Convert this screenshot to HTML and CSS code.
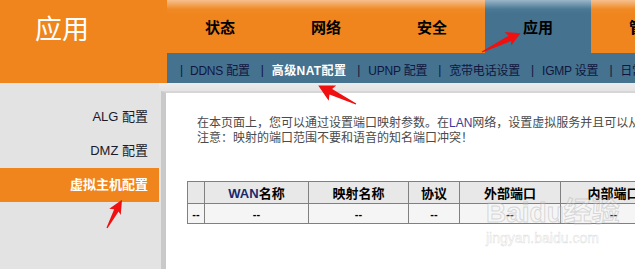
FILE: index.html
```html
<!DOCTYPE html>
<html lang="zh-CN">
<head>
    <meta charset="UTF-8">
    <title>应用 - 虚拟主机配置</title>
    <link rel="stylesheet" href="styles.css">
</head>
<body>

    <div class="top">
        <div class="logo">应用</div>
        <div class="nav">
            <div class="tabs">
                <div class="tab">状态</div>
                <div class="tab">网络</div>
                <div class="tab">安全</div>
                <div class="tab active">应用</div>
                <div class="tab">管理</div>
            </div>
            <div class="subnav">
                <span class="sep">|</span><span>DDNS 配置</span>
                <span class="sep">|</span><span class="cur">高级NAT配置</span>
                <span class="sep">|</span><span>UPNP 配置</span>
                <span class="sep">|</span><span>宽带电话设置</span>
                <span class="sep">|</span><span>IGMP 设置</span>
                <span class="sep">|</span><span>日常应用</span>
            </div>
        </div>
    </div>

    <div class="body">
        <ul class="side">
            <li>ALG 配置</li>
            <li>DMZ 配置</li>
            <li class="active">虚拟主机配置</li>
        </ul>
        <div class="main">
            <div class="panel">
                <p class="intro">在本页面上，您可以通过设置端口映射参数。在<span class="lan">LAN</span>网络，设置虚拟服务并且可以从WAN侧访问。<br>注意：映射的端口范围不要和语音的知名端口冲突！</p>
                <table class="grid">
                    <tr>
                        <th class="c0"></th>
                        <th class="c1"><span class="lan">WAN</span>名称</th>
                        <th class="c2">映射名称</th>
                        <th class="c3">协议</th>
                        <th class="c4">外部端口</th>
                        <th class="c5">内部端口</th>
                        <th class="c6">服务器IP地址</th>
                    </tr>
                    <tr>
                        <td>--</td>
                        <td>--</td>
                        <td>--</td>
                        <td>--</td>
                        <td>--</td>
                        <td>--</td>
                        <td>--</td>
                    </tr>
                </table>
            </div>
        </div>
    </div>

    <div class="mark">
        <div class="mark-big">Bai<span class="paw">du</span>经验</div>
        <div class="mark-small">jingyan.baidu.com</div>
    </div>

    <svg class="arrows" width="635" height="269" viewBox="0 0 635 269">
        <g fill="#f01010">
            <polygon transform="translate(482 52) rotate(-26)" points="0,-0.6 31,-3 29,-8 43,0 29,7 31,3 0,0.6"/>
            <polygon transform="translate(356 104) rotate(-154)" points="0,-0.6 28,-3 26,-9 42,0 26,8 28,3 0,0.6"/>
            <polygon transform="translate(107 228) rotate(-62)" points="0,-0.6 20,-2.5 18,-7 32,0 18,6 20,2.5 0,0.6"/>
        </g>
    </svg>

</body>
</html>
```

FILE: styles.css
```css
html, body { margin: 0; padding: 0; }
body { width: 635px; height: 269px; overflow: hidden; position: relative; background: #e3e3e3; font-family: "Liberation Sans", "Noto Sans CJK SC", sans-serif; font-size: 12px; color: #222; }

.top { display: flex; height: 83px; }
.logo { width: 167px; flex-shrink: 0; background: #f0851d; color: #fff; font-size: 27px; padding: 8px 0 0 35px; box-sizing: border-box; }
.nav { flex: 1; display: flex; flex-direction: column; min-width: 0; }
.tabs { display: flex; height: 53px; }
.tab { width: 106px; flex-shrink: 0; text-align: center; line-height: 56px; font-size: 15px; font-weight: bold; color: #000; background: linear-gradient(#f7c08f 0, #f08a26 9px, #f0851d 14px); }
.tab.active { background: linear-gradient(#9bb6c8 0, #4b7995 9px, #44728f 14px); }
.subnav { height: 30px; background: #44728f; display: flex; align-items: center; padding: 3px 0 0 11px; box-sizing: border-box; white-space: nowrap; color: #111640; font-size: 12px; letter-spacing: -0.2px; }
.subnav .sep { margin: 0 8px 0 11px; }
.subnav .sep:first-child { margin-left: 2px; margin-right: 7px; }
.subnav .cur { color: #fff; font-weight: bold; letter-spacing: 0.4px; }

.body { display: flex; height: 186px; }
.side { width: 159px; flex-shrink: 0; list-style: none; margin: 0; padding: 17px 0 0; }
.side li { height: 34px; line-height: 34px; text-align: right; padding-right: 11px; font-size: 13px; color: #1a1a2a; }
.side li.active { background: #f0851d; color: #fff; font-weight: bold; }
.main { flex: 1; min-width: 0; overflow: hidden; padding: 8px 0 0 2px; background: linear-gradient(#ececec, #e3e3e3 8px); }
.panel { height: 100%; background: #fff; border-left: 5px solid #c9c9c9; border-top: 2px solid #d6d6d6; padding: 23px 0 0 21px; box-sizing: border-box; }
.intro { margin: 0; padding-left: 10px; white-space: nowrap; font-size: 12px; line-height: 15px; color: #4a4a4a; }
.lan { color: #3a3a9a; }

.grid { margin-top: 35px; border-collapse: collapse; table-layout: fixed; width: 600px; font-size: 13px; }
.grid th, .grid td { border: 1px solid #808080; text-align: center; padding: 0; white-space: nowrap; overflow: hidden; }
.grid th { height: 21px; background: #e8e8e8; color: #000; font-weight: bold; }
.grid th .lan { color: #1a2a6a; }
.grid td { height: 19px; background: #f5f5f5; color: #000; font-weight: bold; font-size: 11px; }
.c0 { width: 16px; }
.c1 { width: 103px; }
.c2 { width: 99px; }
.c3 { width: 50px; }
.c4 { width: 100px; }
.c5 { width: 105px; }
.c6 { width: 120px; }

.mark { position: absolute; left: 486px; top: 196px; color: rgba(255, 255, 255, 0.2); -webkit-text-stroke: 1px rgba(175, 175, 175, 0.45); font-family: "Liberation Sans", "Noto Sans CJK SC", sans-serif; pointer-events: none; }
.mark-big { font-size: 28px; font-weight: bold; line-height: 34px; }
.mark-small { font-size: 14px; line-height: 16px; -webkit-text-stroke-width: 0.5px; }
.arrows { position: absolute; left: 0; top: 0; pointer-events: none; }
```
